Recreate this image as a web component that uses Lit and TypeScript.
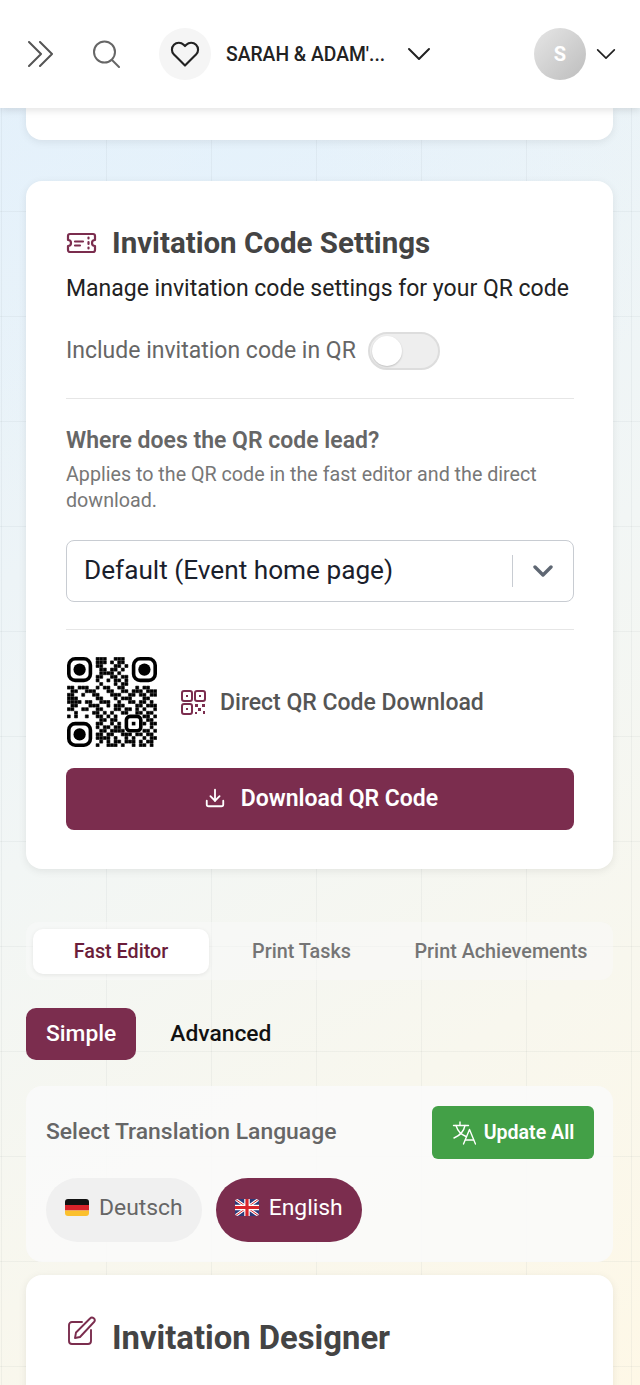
import {LitElement, html, css, svg} from 'lit';
import {customElement} from 'lit/decorators.js';

// 25x25 QR, finder and alignment patterns are drawn on top
const QR_ROWS = [
  '0000000011100111000000000',
  '0000000011101011000000000',
  '0000000011000110100000000',
  '0000000001101101000000000',
  '0000000001111010000000000',
  '0000000011001101100000000',
  '0000000010010110100000000',
  '0000000001000101100000000',
  '1101110010110011000101100',
  '0110011100011001101110111',
  '1100100110001110011011011',
  '1110000011000101110001100',
  '1111011001110010011011010',
  '0110001110010111000110111',
  '1100110011000110110101001',
  '0010000110101001100110110',
  '1010010011010100000001101',
  '0000000001101100000000110',
  '0000000011001010000001011',
  '0000000010110110000000010',
  '0000000001101111000001101',
  '0000000011011001110110110',
  '0000000011110100101001011',
  '0000000001010110111010110',
  '0000000010011101001011010',
];

const qrModules = () =>
  QR_ROWS.flatMap((row, y) =>
    [...row].map((cell, x) =>
      cell === '1'
        ? svg`<rect x=${x + 0.08} y=${y + 0.08} width="0.84" height="0.84" stroke="#000" stroke-width="0.16" stroke-linejoin="round"></rect>`
        : null
    )
  );

const finder = (x: number, y: number) => svg`
  <rect x=${x + 0.5} y=${y + 0.5} width="6" height="6" rx="1.8" fill="none" stroke="#000" stroke-width="1"></rect>
  <circle cx=${x + 3.5} cy=${y + 3.5} r="1.7"></circle>
`;

const chevron = (size: number, width: number) => html`
  <svg width=${size} height=${size} viewBox="0 0 24 24" fill="none" stroke="#222" stroke-width=${width} stroke-linecap="round" stroke-linejoin="round">
    <polyline points="2 7 12 17 22 7"></polyline>
  </svg>
`;

@customElement('app-root')
export class AppRoot extends LitElement {
  static styles = css`
    :host {
      display: block;
      height: 1385px;
      overflow: hidden;
      font-family: Roboto, 'Liberation Sans', sans-serif;
      background-color: #f3f7f6;
      background-image: linear-gradient(rgba(120, 130, 140, 0.08) 1px, transparent 1px),
        linear-gradient(90deg, rgba(120, 130, 140, 0.08) 1px, transparent 1px),
        radial-gradient(circle at 250px 160px, rgba(226, 241, 253, 0.5), transparent 420px),
        linear-gradient(150deg, #e3f0fb 0%, #f2f6f5 50%, #fef8e7 100%);
      background-size: 105px 105px, 105px 105px, 100% 100%, 100% 100%;
      background-position: 1px 1px, 1px 1px, 0 0, 0 0;
    }

    .header {
      position: relative;
      z-index: 2;
      height: 108px;
      box-sizing: border-box;
      display: flex;
      align-items: center;
      background: #fff;
      box-shadow: 0 2px 8px rgba(0, 0, 0, 0.12);
      padding: 0 24px 0 28px;
    }
    .header svg {
      display: block;
      flex: none;
    }
    .search {
      margin-left: 38px;
    }
    .event-icon {
      width: 52px;
      height: 52px;
      margin-left: 39px;
      border-radius: 50%;
      background: #f5f5f5;
      display: flex;
      align-items: center;
      justify-content: center;
    }
    .event-name {
      margin-left: 15px;
      width: 159px;
      font-size: 19.3px;
      font-weight: 500;
      color: #222;
      white-space: nowrap;
    }
    .event-chevron {
      margin-left: 22px;
    }
    .avatar {
      width: 52px;
      height: 52px;
      margin-left: auto;
      border-radius: 50%;
      background: linear-gradient(135deg, #e6e6e6, #bdbdbd);
      color: #fff;
      font-size: 20px;
      font-weight: 700;
      display: flex;
      align-items: center;
      justify-content: center;
    }
    .avatar-chevron {
      margin-left: 10px;
    }

    .content {
      padding: 0 27px 0 26px;
    }
    .card {
      background: #fff;
      border-radius: 16px;
      box-shadow: 0 2px 8px rgba(0, 0, 0, 0.08);
    }
    .card-stub {
      height: 32px;
      border-radius: 0 0 16px 16px;
      margin-bottom: 41px;
    }
    .settings {
      height: 688px;
      box-sizing: border-box;
      padding: 44px 39px 0 40px;
    }
    .title-row {
      display: flex;
      align-items: center;
      height: 36px;
    }
    .title-row svg {
      flex: none;
      margin-right: 15px;
    }
    h2 {
      margin: 0;
      font-size: 29.5px;
      line-height: 36px;
      font-weight: 700;
      color: #444;
      white-space: nowrap;
    }
    .subtitle {
      margin: 14px 0 0;
      font-size: 23px;
      line-height: 28px;
      color: #222;
      white-space: nowrap;
    }
    .toggle-row {
      display: flex;
      align-items: center;
      height: 38px;
      margin-top: 29px;
      gap: 12px;
      font-size: 23px;
      color: #666;
    }
    .toggle-row span {
      margin-top: -2px;
    }
    .toggle {
      width: 72px;
      height: 38px;
      box-sizing: border-box;
      border: 2px solid #ddd;
      border-radius: 19px;
      background: #eee;
      padding: 2px;
    }
    .knob {
      width: 30px;
      height: 30px;
      border-radius: 50%;
      background: #fff;
      box-shadow: 0 1px 2px rgba(0, 0, 0, 0.2);
    }
    .divider {
      height: 1px;
      background: #e6e6e6;
    }
    .toggle-row + .divider {
      margin-top: 28px;
    }
    .lead-title {
      margin: 28px 0 0;
      font-size: 23px;
      line-height: 28px;
      font-weight: 600;
      color: #666;
    }
    .lead-note {
      margin: 7px 0 0;
      font-size: 19.7px;
      line-height: 26px;
      color: #777;
    }
    .select {
      display: flex;
      align-items: center;
      height: 62px;
      box-sizing: border-box;
      margin-top: 26px;
      padding-left: 17px;
      border: 1px solid #c8ccd2;
      border-radius: 8px;
      font-size: 26.2px;
      color: #1a202c;
    }
    .select-text {
      flex: 1;
      margin-top: -2px;
    }
    .select-arrow {
      display: flex;
      align-items: center;
      justify-content: center;
      width: 60px;
      height: 32px;
      border-left: 1px solid #c8ccd2;
    }
    .select + .divider {
      margin-top: 27px;
    }
    .qr-row {
      display: flex;
      align-items: center;
      margin-top: 27px;
      font-size: 23px;
      font-weight: 500;
      color: #555;
    }
    .qr {
      display: block;
      margin-left: 1px;
      margin-right: 23px;
    }
    .qr-label-icon {
      margin-right: 13px;
    }
    .download {
      display: flex;
      align-items: center;
      justify-content: center;
      gap: 15px;
      height: 62px;
      box-sizing: border-box;
      padding: 0 0 2px 2px;
      margin-top: 21px;
      border-radius: 8px;
      background: #7b2d4e;
      color: #fff;
      font-size: 23px;
      font-weight: 600;
    }

    .tabs {
      display: flex;
      align-items: center;
      height: 58px;
      box-sizing: border-box;
      margin-top: 53px;
      padding-left: 7px;
      border-radius: 12px;
      background: rgba(250, 250, 250, 0.5);
      font-size: 19.8px;
      font-weight: 500;
      color: #757575;
    }
    .tab {
      display: flex;
      flex: none;
      align-items: center;
      justify-content: center;
      height: 45px;
    }
    .tab-fast {
      width: 176px;
      border-radius: 10px;
      background: #fff;
      color: #6b1d3a;
      box-shadow: 0 1px 4px rgba(0, 0, 0, 0.08);
    }
    .tab-tasks {
      width: 185px;
    }
    .tab-achievements {
      width: 214px;
    }

    .modes {
      display: flex;
      align-items: center;
      gap: 14px;
      margin-top: 28px;
      font-size: 22.8px;
      font-weight: 500;
      color: #111;
    }
    .mode {
      height: 52px;
      box-sizing: border-box;
      padding: 0 20px 2px;
      display: flex;
      align-items: center;
      border-radius: 10px;
    }
    .mode-active {
      background: #7b2d4e;
      color: #fff;
    }

    .languages {
      height: 176px;
      box-sizing: border-box;
      margin-top: 26px;
      padding: 20px 19px 0 20px;
      border-radius: 16px;
      background: rgba(250, 250, 250, 0.9);
    }
    .languages-head {
      display: flex;
      align-items: center;
      justify-content: space-between;
      height: 53px;
    }
    .languages-title {
      margin-top: -2px;
      font-size: 22.9px;
      font-weight: 500;
      color: #666;
    }
    .update-all {
      display: flex;
      align-items: center;
      justify-content: center;
      gap: 8px;
      width: 162px;
      height: 53px;
      border-radius: 6px;
      background: #43a047;
      color: #fff;
      font-size: 19.6px;
      font-weight: 600;
    }
    .chips {
      display: flex;
      gap: 14px;
      margin-top: 19px;
    }
    .chip {
      display: flex;
      align-items: center;
      gap: 10px;
      height: 64px;
      box-sizing: border-box;
      padding: 0 19px 6px;
      border-radius: 32px;
      font-size: 22.9px;
      background: #f0f0f0;
      color: #666;
    }
    .chip-active {
      background: #7b2d4e;
      color: #fff;
    }
    .flag {
      display: block;
      border-radius: 3px;
    }

    .designer {
      margin-top: 13px;
      height: 200px;
      box-sizing: border-box;
      padding: 41px 40px 0 41px;
    }
    .designer-head {
      display: flex;
      align-items: flex-start;
    }
    .designer-head svg {
      flex: none;
      margin-right: 15px;
    }
    .designer-head h2 {
      margin-top: 1px;
      font-size: 32.8px;
      line-height: 42px;
    }
  `;

  render() {
    return html`
      <div class="header">
        <svg width="26" height="26" viewBox="0 0 26 26" fill="none" stroke="#555" stroke-width="2" stroke-linecap="round" stroke-linejoin="round">
          <polyline points="1 1 13 13 1 25"></polyline>
          <polyline points="12 1 24 13 12 25"></polyline>
        </svg>
        <svg class="search" width="28" height="28" viewBox="0 0 28 28" fill="none" stroke="#666" stroke-width="2" stroke-linecap="round">
          <circle cx="12.5" cy="12" r="10.5"></circle>
          <line x1="20" y1="20" x2="27" y2="27"></line>
        </svg>
        <div class="event-icon">
          <svg width="30" height="30" viewBox="0 0 24 24" fill="none" stroke="#222" stroke-width="1.7" stroke-linecap="round" stroke-linejoin="round">
            <path d="M20.84 4.61a5.5 5.5 0 0 0-7.78 0L12 5.67l-1.06-1.06a5.5 5.5 0 0 0-7.78 7.78l1.06 1.06L12 21.23l7.78-7.78 1.06-1.06a5.5 5.5 0 0 0 0-7.78z"></path>
          </svg>
        </div>
        <div class="event-name">SARAH &amp; ADAM'...</div>
        <div class="event-chevron">${chevron(24, 2)}</div>
        <div class="avatar">S</div>
        <div class="avatar-chevron">${chevron(20, 2)}</div>
      </div>

      <div class="content">
        <div class="card card-stub"></div>

        <div class="card settings">
          <div class="title-row">
            <svg width="31" height="22" viewBox="0 0 31 22" fill="none" stroke="#7b2d4e" stroke-width="2.2" stroke-linecap="round" stroke-linejoin="round">
              <path d="M4 2h23a2 2 0 0 1 2 2v4a3 3 0 0 0 0 6v4a2 2 0 0 1-2 2H4a2 2 0 0 1-2-2v-4a3 3 0 0 0 0-6V4a2 2 0 0 1 2-2z"></path>
              <path d="M9 9.5h8M9 13.5h5"></path>
              <path d="M22.5 5.5v1M22.5 10v2M22.5 15.5v1"></path>
            </svg>
            <h2>Invitation Code Settings</h2>
          </div>
          <p class="subtitle">Manage invitation code settings for your QR code</p>
          <div class="toggle-row">
            <span>Include invitation code in QR</span>
            <div class="toggle"><div class="knob"></div></div>
          </div>
          <div class="divider"></div>
          <p class="lead-title">Where does the QR code lead?</p>
          <p class="lead-note">Applies to the QR code in the fast editor and the direct download.</p>
          <div class="select">
            <span class="select-text">Default (Event home page)</span>
            <div class="select-arrow">
              <svg width="20" height="12" viewBox="0 0 20 12" fill="none" stroke="#5f6773" stroke-width="3.4" stroke-linecap="round" stroke-linejoin="round">
                <polyline points="2 2 10 10 18 2"></polyline>
              </svg>
            </div>
          </div>
          <div class="divider"></div>
          <div class="qr-row">
            <svg class="qr" width="90" height="90" viewBox="0 0 25 25" fill="#000">
              ${qrModules()}
              ${finder(0, 0)}
              ${finder(18, 0)}
              ${finder(0, 18)}
              <rect x="16.5" y="16.5" width="4" height="4" rx="1" fill="none" stroke="#000" stroke-width="1"></rect>
              <rect x="18" y="18" width="1" height="1"></rect>
            </svg>
            <svg class="qr-label-icon" width="27" height="27" viewBox="0 0 27 27" fill="none" stroke="#7b2d4e" stroke-width="2" stroke-linejoin="round">
              <rect x="2" y="2" width="10" height="10" rx="2"></rect>
              <rect x="15" y="2" width="10" height="10" rx="2"></rect>
              <rect x="2" y="15" width="10" height="10" rx="2"></rect>
              <path d="M6 6h2v2H6zM19 6h2v2h-2zM6 19h2v2H6z" fill="#7b2d4e" stroke="none"></path>
              <path d="M15 15h3v3h-3zM22 15h3v3h-3zM18 19h3v3h-3zM15 23h2v2h-2zM23 22h2v3h-2z" fill="#7b2d4e" stroke="none"></path>
            </svg>
            <span>Direct QR Code Download</span>
          </div>
          <div class="download">
            <svg width="22" height="22" viewBox="0 0 24 24" fill="none" stroke="#fff" stroke-width="2" stroke-linecap="round" stroke-linejoin="round">
              <path d="M21 15v4a2 2 0 0 1-2 2H5a2 2 0 0 1-2-2v-4"></path>
              <polyline points="7 10 12 15 17 10"></polyline>
              <line x1="12" y1="15" x2="12" y2="3"></line>
            </svg>
            <span>Download QR Code</span>
          </div>
        </div>

        <div class="tabs">
          <div class="tab tab-fast">Fast Editor</div>
          <div class="tab tab-tasks">Print Tasks</div>
          <div class="tab tab-achievements">Print Achievements</div>
        </div>

        <div class="modes">
          <div class="mode mode-active">Simple</div>
          <div class="mode">Advanced</div>
        </div>

        <div class="languages">
          <div class="languages-head">
            <span class="languages-title">Select Translation Language</span>
            <div class="update-all">
              <svg width="24" height="24" viewBox="0 0 24 24" fill="none" stroke="#fff" stroke-width="1.4" stroke-linecap="round" stroke-linejoin="round">
                <path d="M8 1v3"></path>
                <path d="M1.5 4.5h15"></path>
                <path d="M13 4.5c-1 5-5 10-11 12.500"></path>
                <path d="M4 4.500c1.500 5 5 9 10 11"></path>
                <path d="M11.500 23l6-14.500 6 14.500"></path>
                <path d="M13.500 19h8"></path>
              </svg>
              <span>Update All</span>
            </div>
          </div>
          <div class="chips">
            <div class="chip">
              <svg class="flag" width="24" height="17" viewBox="0 0 24 17">
                <rect width="24" height="6" fill="#111"></rect>
                <rect y="6" width="24" height="5.500" fill="#d8232a"></rect>
                <rect y="11.500" width="24" height="5.500" fill="#fbc02d"></rect>
              </svg>
              <span>Deutsch</span>
            </div>
            <div class="chip chip-active">
              <svg class="flag" width="24" height="17" viewBox="0 0 24 17">
                <rect width="24" height="17" fill="#2b3a7a"></rect>
                <path d="M0 0l24 17M24 0L0 17" stroke="#fff" stroke-width="3"></path>
                <path d="M0 0l24 17M24 0L0 17" stroke="#d8232a" stroke-width="1"></path>
                <path d="M12 0v17M0 8.500h24" stroke="#fff" stroke-width="5.500"></path>
                <path d="M12 0v17M0 8.500h24" stroke="#d8232a" stroke-width="3.200"></path>
              </svg>
              <span>English</span>
            </div>
          </div>
        </div>

        <div class="card designer">
          <div class="designer-head">
            <svg width="30" height="30" viewBox="0 0 30 30" fill="none" stroke="#7b2d4e" stroke-width="1.900" stroke-linecap="round" stroke-linejoin="round">
              <path d="M15 6H5a3 3 0 0 0-3 3v16a3 3 0 0 0 3 3h16a3 3 0 0 0 3-3V14"></path>
              <path d="M8 22l1-5.500L23 2.500a2.400 2.400 0 0 1 4 3.500L13 21z"></path>
            </svg>
            <h2>Invitation Designer</h2>
          </div>
        </div>
      </div>
    `;
  }
}
